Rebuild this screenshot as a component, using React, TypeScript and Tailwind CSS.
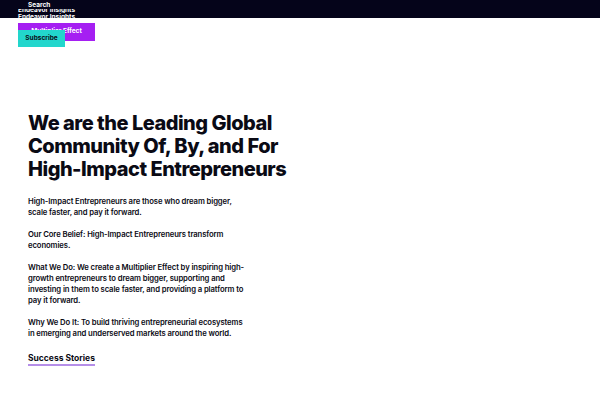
export default function App() {
  return (
    <div className="relative w-[600px] h-[400px] bg-white overflow-hidden font-['Inter',sans-serif] text-[#0a0a14]">
      {/* Broken top bar */}
      <div className="h-[18px] bg-[#05041a] pl-[28px] pt-[1px] overflow-hidden">
        <div className="text-[6.5px] leading-[8px] font-bold text-white">Search</div>
        <div className="text-[6.5px] leading-[4px] font-bold text-white h-[4px] overflow-hidden ml-[-10px]">
          <span className="relative top-[-1px]">Endeavor Insights</span>
        </div>
        <div className="text-[6.5px] leading-[8px] font-bold text-white ml-[-10px]">Endeavor Insights</div>
      </div>

      {/* Overlapping buttons */}
      <div className="relative h-[30px]">
        <div className="absolute left-[18px] top-[5px] w-[77px] h-[18px] bg-[#a51ff2] text-white text-[6.5px] font-bold flex items-center justify-center">
          Multiplier Effect
        </div>
        <div className="absolute left-[18px] top-[12px] w-[47px] h-[17px] bg-[#22d6cc] text-[#0a0a14] text-[6.5px] font-bold flex items-center justify-center pt-[1px]">
          Subscribe
        </div>
      </div>

      <main className="pl-[28px] pt-[64px] w-[320px]">
        <h1 className="text-[20px] leading-[23px] font-extrabold tracking-[-0.5px]">
          We are the Leading Global Community Of, By, and For High-Impact Entrepreneurs
        </h1>

        <div className="mt-[16px] w-[222px] text-[7.7px] leading-[10.8px] font-semibold tracking-[-0.1px] flex flex-col gap-[11.5px]">
          <p>High-Impact Entrepreneurs are those who dream bigger, scale faster, and pay it forward.</p>
          <p>Our Core Belief: High-Impact Entrepreneurs transform economies.</p>
          <p>
            What We Do: We create a Multiplier Effect by inspiring high-growth entrepreneurs to dream bigger,
            supporting and investing in them to scale faster, and providing a platform to pay it forward.
          </p>
          <p>Why We Do It: To build thriving entrepreneurial ecosystems in emerging and underserved markets around the world.</p>
        </div>

        <a className="inline-block mt-[14px] text-[8.5px] leading-[11px] font-bold border-b-[2px] border-[#b58ee8]">
          Success Stories
        </a>
      </main>
    </div>
  );
}
